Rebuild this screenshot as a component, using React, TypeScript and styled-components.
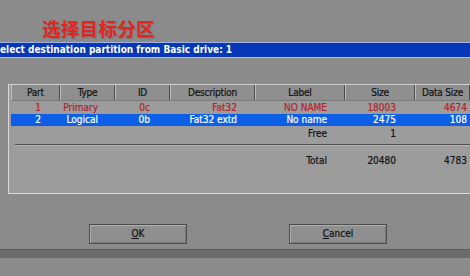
import React from "react";
import styled, { createGlobalStyle } from "styled-components";

const Global = createGlobalStyle`
  html, body { margin: 0; padding: 0; background: #8b8b8b; overflow: hidden; }
  #root { width: 470px; height: 276px; }
`;

const Page = styled.div`
  width: 470px;
  height: 276px;
  display: flex;
  flex-direction: column;
  background: #8b8b8b;
  font-family: "Liberation Sans Narrow", "DejaVu Sans Condensed", "Liberation Sans", sans-serif;
  overflow: hidden;
`;

const Title = styled.div`
  margin-top: 16px;
  padding-left: 42px;
  height: 25px;
  line-height: 25px;
  font-family: "Noto Sans CJK SC", "Noto Sans", sans-serif;
  font-weight: 700;
  font-size: 18.5px;
  color: #e5231f;
  letter-spacing: 0.3px;
  text-shadow: 1px 1px 1px rgba(60, 60, 60, 0.35);
`;

const Bar = styled.div`
  margin-top: 1px;
  height: 14px;
  background: #0637b8;
  border-top: 1px solid #9fb3e6;
  border-bottom: 1px solid #b7c2dc;
  color: #ffffff;
  font-family: "DejaVu Sans Condensed", "DejaVu Sans", sans-serif;
  font-weight: 700;
  font-size: 10px;
  line-height: 14px;
  white-space: nowrap;
`;

const Panel = styled.div`
  margin-top: 26px;
  margin-left: 8px;
  margin-right: -20px;
  height: 108px;
  background: #9c9c9c;
  border-top: 1px solid #cfcfcf;
  border-left: 1px solid #d8d8d8;
  border-bottom: 1px solid #d8d8d8;
  padding-left: 2px;
  display: flex;
  flex-direction: column;
  -webkit-text-stroke: 0.2px currentColor;
`;

const cols = "49px 55px 55px 85px 90px 70px 55px 1fr";

const Header = styled.div`
  display: grid;
  grid-template-columns: ${cols};
  height: 15px;
  background: #8f8f8f;
  border-bottom: 1px solid #7a7a7a;
`;

const HeadCell = styled.div`
  border-right: 1px solid #4a4a4a;
  border-left: 1px solid #bdbdbd;
  font-size: 10px;
  letter-spacing: -0.2px;
  line-height: 15px;
  text-align: center;
  color: #111;
  white-space: nowrap;
  &:last-child { border-right: none; }
`;

const Row = styled.div<{ $sel?: boolean; $h: number }>`
  display: grid;
  grid-template-columns: ${cols};
  height: ${(p) => p.$h}px;
  background: ${(p) => (p.$sel ? "#0c5fe6" : "transparent")};
  color: ${(p) => (p.$sel ? "#ffffff" : "#ad2529")};
  font-size: 10px;
  line-height: ${(p) => p.$h}px;
`;

const Cell = styled.div<{ $pad?: number }>`
  text-align: right;
  padding-right: ${(p) => (p.$pad === undefined ? 18 : p.$pad)}px;
  white-space: nowrap;
`;

const SumRow = styled.div<{ $top: number }>`
  display: grid;
  grid-template-columns: ${cols};
  margin-top: ${(p) => p.$top}px;
  height: 12px;
  line-height: 12px;
  font-size: 10px;
  color: #111;
`;

const Divider = styled.div`
  margin-top: 4px;
  margin-left: 4px;
  height: 1px;
  background: #4e4e4e;
  border-bottom: 1px solid #b5b5b5;
`;

const Buttons = styled.div`
  margin-top: 30px;
  display: flex;
  padding-left: 89px;
  gap: 102px;
`;

const Button = styled.div`
  width: 96px;
  height: 18px;
  border: 1px solid #4c4c4c;
  box-shadow: inset 1px 1px 0 #b0b0b0, inset -1px -1px 0 #7a7a7a;
  background: #8f8f8f;
  font-size: 10px;
  line-height: 18px;
  text-align: center;
  color: #111;
  -webkit-text-stroke: 0.2px currentColor;
  u { text-decoration: underline; text-underline-offset: 1px; }
`;

const Band = styled.div`
  margin-top: 5px;
  height: 8px;
  background: #6b6b6b;
  border-top: 1px solid #5a5a5a;
`;

export default function App() {
  return (
    <Page>
      <Global />
      <Title>选择目标分区</Title>
      <Bar>elect destination partition from Basic drive: 1</Bar>
      <Panel>
        <Header>
          <HeadCell>Part</HeadCell>
          <HeadCell>Type</HeadCell>
          <HeadCell>ID</HeadCell>
          <HeadCell>Description</HeadCell>
          <HeadCell>Label</HeadCell>
          <HeadCell>Size</HeadCell>
          <HeadCell>Data Size</HeadCell>
          <HeadCell />
        </Header>
        <Row $h={13}>
          <Cell $pad={19}>1</Cell>
          <Cell $pad={17}>Primary</Cell>
          <Cell $pad={20}>0c</Cell>
          <Cell>Fat32</Cell>
          <Cell>NO NAME</Cell>
          <Cell $pad={19}>18003</Cell>
          <Cell $pad={3}>4674</Cell>
        </Row>
        <Row $sel $h={12}>
          <Cell $pad={19}>2</Cell>
          <Cell $pad={17}>Logical</Cell>
          <Cell $pad={20}>0b</Cell>
          <Cell>Fat32 extd</Cell>
          <Cell>No name</Cell>
          <Cell $pad={19}>2475</Cell>
          <Cell $pad={3}>108</Cell>
        </Row>
        <SumRow $top={2}>
          <Cell />
          <Cell />
          <Cell />
          <Cell />
          <Cell>Free</Cell>
          <Cell $pad={19}>1</Cell>
          <Cell />
        </SumRow>
        <Divider />
        <SumRow $top={9}>
          <Cell />
          <Cell />
          <Cell />
          <Cell />
          <Cell>Total</Cell>
          <Cell $pad={19}>20480</Cell>
          <Cell $pad={3}>4783</Cell>
        </SumRow>
      </Panel>
      <Buttons>
        <Button><u>O</u>K</Button>
        <Button><u>C</u>ancel</Button>
      </Buttons>
      <Band />
    </Page>
  );
}
